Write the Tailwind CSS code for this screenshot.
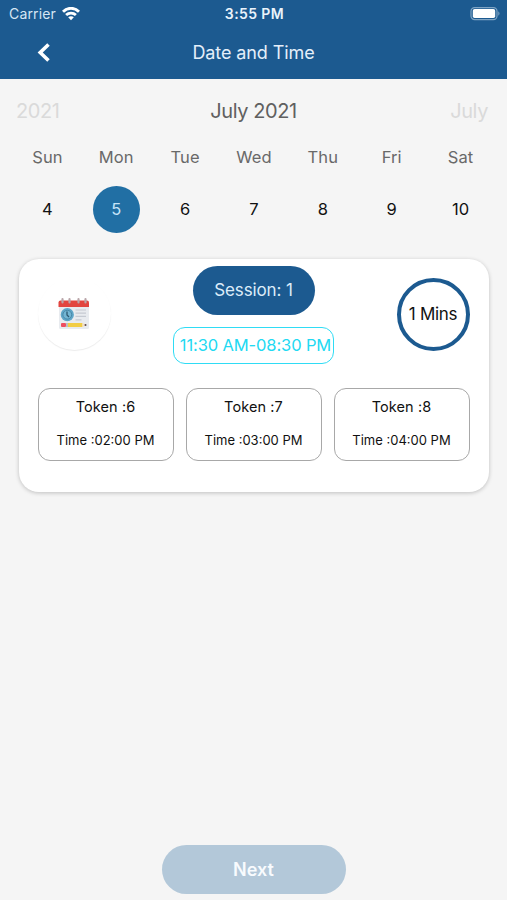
<!DOCTYPE html>
<html lang="en">
<head>
    <meta charset="UTF-8">
    <meta name="viewport" content="width=device-width, initial-scale=1.0">
    <title>Date and Time</title>
    <script src="https://cdn.jsdelivr.net/npm/@tailwindcss/browser@4"></script>
</head>
<body class="bg-[#f5f5f5] font-['Inter',sans-serif] h-[900px] flex flex-col overflow-hidden">

    <!-- Header -->
    <header class="h-[79px] shrink-0 bg-[#1c5a90] text-white">
        <div class="h-[27px] grid grid-cols-3 items-center pl-[9px] pr-[7px]">
            <div class="flex items-center gap-[6px]">
                <span class="text-[14px] tracking-[0.15px] leading-[27px] text-[#d6e6f4]">Carrier</span>
                <svg class="w-[18px] h-[14px]" viewBox="0 0 18 14" fill="none" stroke="#fff" stroke-width="2.8">
                    <path d="M1 4.700C5.500 .1 12.500 .1 17 4.700"/>
                    <path d="M4.100 8.100C6.900 5.400 11.100 5.400 13.900 8.100"/>
                    <path d="M9 13.200L6.200 10.300C7.800 8.900 10.200 8.900 11.800 10.300Z" fill="#fff" stroke="none"/>
                </svg>
            </div>
            <span class="text-[14px] font-semibold tracking-[0.4px] text-center leading-[27px] text-[#eaf3fb]">3:55 PM</span>
            <svg class="w-[30px] h-[14px] justify-self-end" viewBox="0 0 30 14">
                <rect x="1" y=".6" width="26" height="12" rx="3.600" fill="none" stroke="#7fa4c4" stroke-width="1.200"/>
                <rect x="2.800" y="2" width="22.400" height="9" rx="1.800" fill="#fff"/>
                <path d="M28.300 4.300C29.900 5.100 29.900 7.900 28.300 8.700Z" fill="#7fa4c4"/>
            </svg>
        </div>
        <div class="h-[50px] grid grid-cols-[87px_1fr_87px] items-center">
            <button class="justify-self-center">
                <svg class="w-[14px] h-[20px]" viewBox="0 0 14 20" fill="none" stroke="#fff" stroke-width="3.600">
                    <path d="M11.500 2.500L3.200 10.500L11.500 18.500"/>
                </svg>
            </button>
            <h1 class="text-center text-[18px] tracking-[-0.1px] text-[#e4effa]">Date and Time</h1>
        </div>
    </header>

    <!-- Week calendar -->
    <section class="h-[180px] shrink-0">
        <div class="h-[63px] grid grid-cols-3 items-center px-[16px] text-[20px] tracking-[-0.4px]">
            <span class="text-[#dadada]">2021</span>
            <span class="text-center text-[#606060]">July 2021</span>
            <span class="text-right text-[#dadada] pr-[3px]">July</span>
        </div>
        <div class="grid grid-cols-7 pl-[13px] pr-[12px] text-center text-[16.500px] tracking-[0.1px] text-[#696969] leading-[30px]">
            <span>Sun</span>
            <span>Mon</span>
            <span>Tue</span>
            <span>Wed</span>
            <span>Thu</span>
            <span>Fri</span>
            <span>Sat</span>
        </div>
        <div class="mt-[14px] h-[47px] grid grid-cols-7 pl-[13px] pr-[12px] items-center justify-items-center text-[16.500px] text-[#111]">
            <span>4</span>
            <span class="size-[47px] rounded-full bg-[#216fa4] text-[#c6e4f8] flex items-center justify-center">5</span>
            <span>6</span>
            <span>7</span>
            <span>8</span>
            <span>9</span>
            <span>10</span>
        </div>
    </section>

    <!-- Session card -->
    <section class="mx-auto w-[470px] h-[233px] shrink-0 rounded-[20px] bg-white shadow-[0_1px_4px_rgba(0,0,0,0.22)] px-[19px] pt-[7px]">
        <div class="flex justify-between">
            <div class="mt-[11px] size-[73px] rounded-full bg-white shadow-[0_1px_1px_rgba(0,0,0,0.08)] flex items-center justify-center">
                <svg class="w-[34px] h-[34px] -ml-[1px]" viewBox="0 0 34 34">
                    <rect x="2" y="5" width="30" height="27" rx="1.500" fill="#e8ebef"/>
                    <path d="M1.500 10V5.500Q1.500 3.500 3.500 3.500H30Q32 3.500 32 5.500V10Z" fill="#e2453f"/>
                    <g stroke="#b9a4a8" stroke-width="2.200" stroke-linecap="round">
                        <path d="M5.500 2.200V5.500M12.500 2.200V5.500M21.500 2.200V5.500M28.500 2.200V5.500"/>
                    </g>
                    <circle cx="10.300" cy="17.700" r="6.600" fill="#5fa6c8"/>
                    <circle cx="10.300" cy="17.700" r="4.400" fill="#73b5d3" stroke="#407f9f" stroke-width=".8"/>
                    <path d="M10 14.500V18L12 20" fill="none" stroke="#2c5870" stroke-width="1.300"/>
                    <path d="M18.500 13H29M18.500 16.200H29M18.500 19.400H29M18.500 22.800H24.500" stroke="#c5cad2" stroke-width="1.200"/>
                    <rect x="4" y="26" width="5" height="4" rx="1" fill="#ee4e60"/>
                    <rect x="9" y="26" width="2" height="4" fill="#b9bec4"/>
                    <rect x="11" y="26" width="14.500" height="4" fill="#f2cd45"/>
                    <path d="M25.500 26L30 28L25.500 30Z" fill="#f3dfc6"/>
                    <circle cx="28.500" cy="28" r="1" fill="#5b4950"/>
                </svg>
            </div>
            <div class="flex flex-col items-center gap-[12px]">
                <div class="w-[122px] h-[49px] rounded-full bg-[#1c5a90] text-[#dcecf9] text-[17px] tracking-[-0.1px] flex items-center justify-center">Session: 1</div>
                <div class="w-[161px] h-[37px] rounded-[12px] border border-[#2fdcf5] text-[#22d9f2] text-[16.500px] tracking-[-0.12px] whitespace-nowrap flex items-center justify-center pl-[4px]">11:30 AM-08:30 PM</div>
            </div>
            <div class="mt-[12px] size-[73px] rounded-full border-4 border-[#1c5a90] text-[17px] tracking-[-0.3px] text-[#111] flex items-center justify-center whitespace-nowrap">1 Mins</div>
        </div>
        <div class="mt-[24px] grid grid-cols-3 gap-[12px]">
            <div class="h-[73px] rounded-[12px] border border-[#a8a8a8] text-center text-[#111]">
                <p class="mt-[6px] text-[14.500px] leading-[24px] tracking-[0.1px]">Token :6</p>
                <p class="mt-[9px] text-[13px] leading-[24px]">Time :02:00 PM</p>
            </div>
            <div class="h-[73px] rounded-[12px] border border-[#a8a8a8] text-center text-[#111]">
                <p class="mt-[6px] text-[14.500px] leading-[24px] tracking-[0.1px]">Token :7</p>
                <p class="mt-[9px] text-[13px] leading-[24px]">Time :03:00 PM</p>
            </div>
            <div class="h-[73px] rounded-[12px] border border-[#a8a8a8] text-center text-[#111]">
                <p class="mt-[6px] text-[14.500px] leading-[24px] tracking-[0.1px]">Token :8</p>
                <p class="mt-[9px] text-[13px] leading-[24px]">Time :04:00 PM</p>
            </div>
        </div>
    </section>

    <!-- Footer button -->
    <button class="mt-auto mb-[6px] mx-auto w-[184px] h-[49px] shrink-0 rounded-full bg-[#b3c8d9] text-[#f8fbfe] text-[18px] font-semibold">Next</button>

</body>
</html>
